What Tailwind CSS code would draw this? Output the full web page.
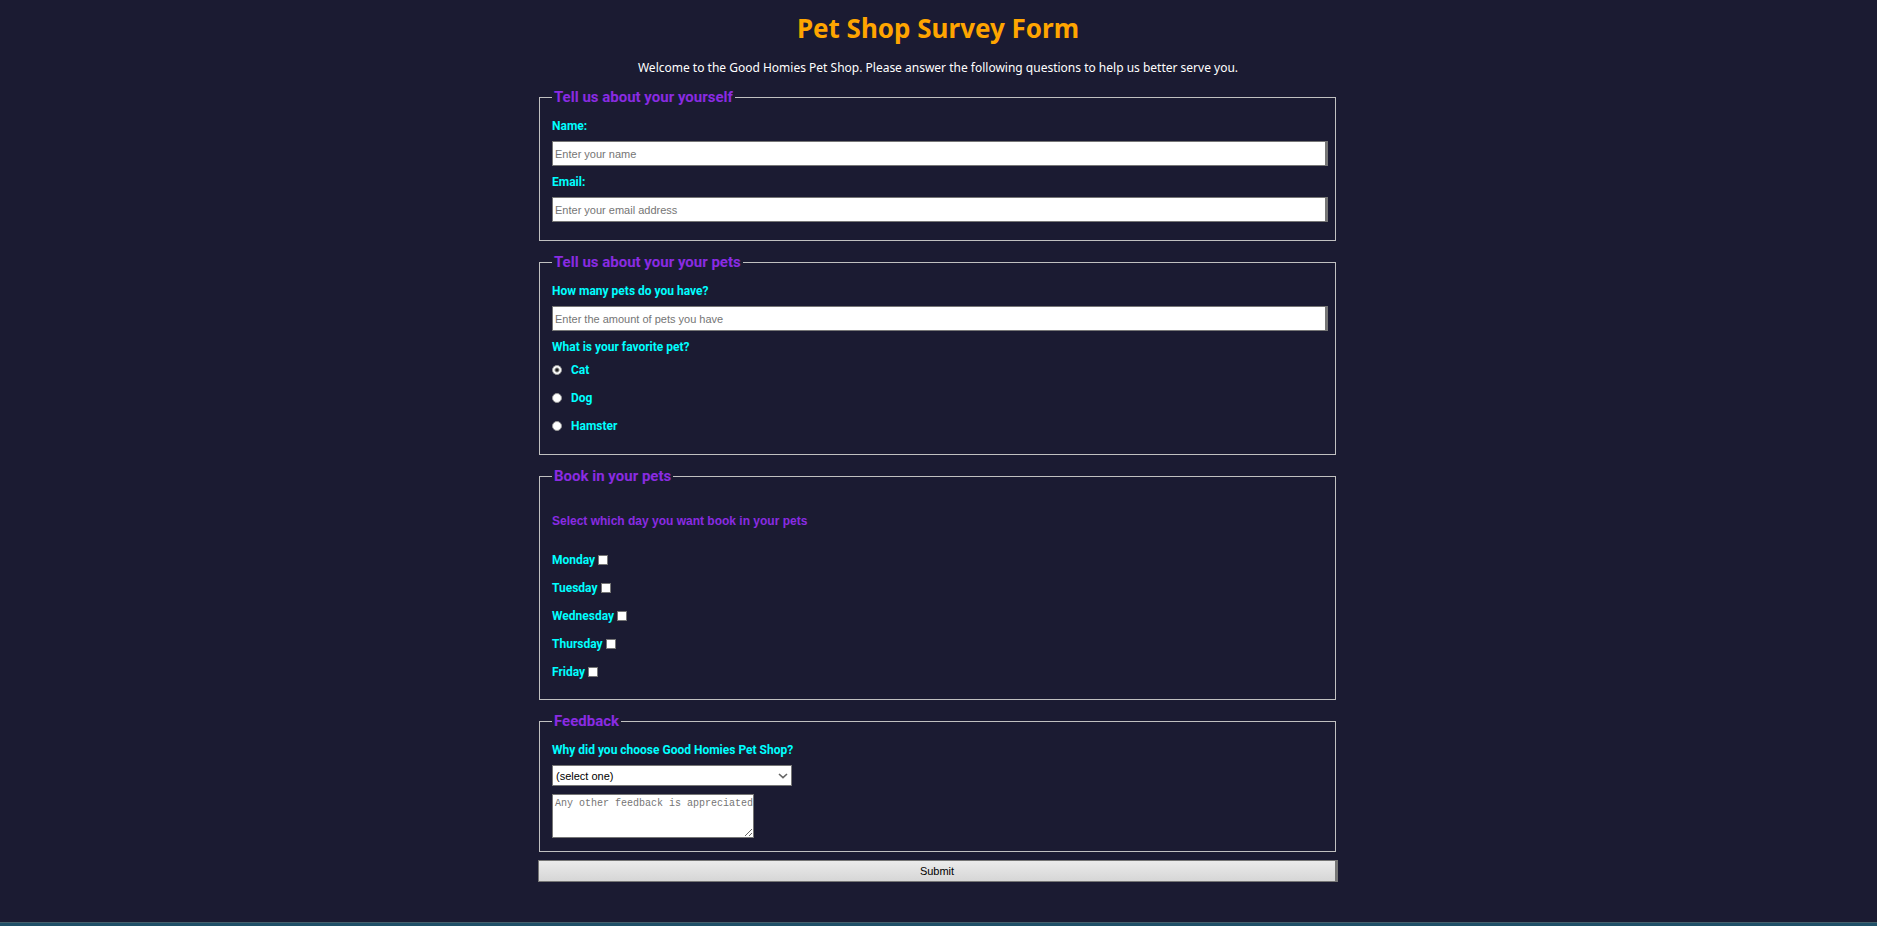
<!DOCTYPE html>
<html lang="en">
<head>
<meta charset="utf-8">
<title>Pet Shop Survey Form</title>
<script src="https://cdn.jsdelivr.net/npm/@tailwindcss/browser@4"></script>
</head>
<body class="bg-white pr-[7px]">
<div class="flex min-h-screen flex-col bg-[#1b1b32] text-white">
  <div class="pr-px">
  <main class="mx-auto w-full max-w-[800px] pt-3">
    <h1 class="text-center font-['Noto_Sans',sans-serif] text-[26px] leading-8 font-bold text-[#ffa500]">Pet Shop Survey Form</h1>
    <p class="mt-3.5 text-center font-['Noto_Sans',sans-serif] text-[12px] leading-5">Welcome to the Good Homies Pet Shop. Please answer the following questions to help us better serve you.</p>

    <form class="mt-[9px] font-['Roboto',sans-serif] text-[12px] leading-5 font-bold text-[#00ffff]">
      <div class="mr-0.5 ml-px flex flex-col gap-[11px]">
        <fieldset class="border border-[#c0c0c0] pr-[7px] pb-[18px] pl-3">
          <legend class="px-0.5 text-[15px] text-[#8a2be2]">Tell us about your yourself</legend>
          <label for="name" class="block pt-[9px]">Name:</label>
          <input id="name" type="text" placeholder="Enter your name" class="mt-[5px] block h-[25px] w-full border border-r-[3px] border-[#767676] bg-white px-0.5 font-['Liberation_Sans',sans-serif] text-[11px] font-normal text-black placeholder:text-[#757575]">
          <label for="email" class="mt-1.5 block">Email:</label>
          <input id="email" type="email" placeholder="Enter your email address" class="mt-[5px] block h-[25px] w-full border border-r-[3px] border-[#767676] bg-white px-0.5 font-['Liberation_Sans',sans-serif] text-[11px] font-normal text-black placeholder:text-[#757575]">
        </fieldset>

        <fieldset class="border border-[#c0c0c0] pr-[7px] pb-[18px] pl-3">
          <legend class="px-0.5 text-[15px] text-[#8a2be2]">Tell us about your your pets</legend>
          <label for="count" class="block pt-[9px]">How many pets do you have?</label>
          <input id="count" type="text" placeholder="Enter the amount of pets you have" class="mt-[5px] block h-[25px] w-full border border-r-[3px] border-[#767676] bg-white px-0.5 font-['Liberation_Sans',sans-serif] text-[11px] font-normal text-black placeholder:text-[#757575]">
          <p class="mt-1.5">What is your favorite pet?</p>
          <div class="mt-[3px] flex flex-col items-start gap-2">
            <label class="flex items-center gap-[9px]"><input type="radio" name="pet" checked class="size-2.5 appearance-none rounded-full border border-[#999] bg-white checked:bg-[radial-gradient(circle,#222_0_1px,#fff_3px)]">Cat</label>
            <label class="flex items-center gap-[9px]"><input type="radio" name="pet" class="size-2.5 appearance-none rounded-full border border-[#999] bg-white checked:bg-[radial-gradient(circle,#222_0_1px,#fff_3px)]">Dog</label>
            <label class="flex items-center gap-[9px]"><input type="radio" name="pet" class="size-2.5 appearance-none rounded-full border border-[#999] bg-white checked:bg-[radial-gradient(circle,#222_0_1px,#fff_3px)]">Hamster</label>
          </div>
        </fieldset>

        <fieldset class="border border-[#c0c0c0] pr-[7px] pb-[17px] pl-3">
          <legend class="px-0.5 text-[15px] text-[#8a2be2]">Book in your pets</legend>
          <h2 class="pt-[25px] font-['Liberation_Sans',sans-serif] text-[#8a2be2]">Select which day you want book in your pets</h2>
          <div class="mt-[19px] flex flex-col items-start gap-2">
            <label class="flex items-center gap-[3px]">Monday<input type="checkbox" class="size-2.5 appearance-none border border-[#767676] bg-white checked:bg-[#0075ff]"></label>
            <label class="flex items-center gap-[3px]">Tuesday<input type="checkbox" class="size-2.5 appearance-none border border-[#767676] bg-white checked:bg-[#0075ff]"></label>
            <label class="flex items-center gap-[3px]">Wednesday<input type="checkbox" class="size-2.5 appearance-none border border-[#767676] bg-white checked:bg-[#0075ff]"></label>
            <label class="flex items-center gap-[3px]">Thursday<input type="checkbox" class="size-2.5 appearance-none border border-[#767676] bg-white checked:bg-[#0075ff]"></label>
            <label class="flex items-center gap-[3px]">Friday<input type="checkbox" class="size-2.5 appearance-none border border-[#767676] bg-white checked:bg-[#0075ff]"></label>
          </div>
        </fieldset>

        <fieldset class="border border-[#c0c0c0] pr-[7px] pb-[13px] pl-3">
          <legend class="px-0.5 text-[15px] text-[#8a2be2]">Feedback</legend>
          <label for="why" class="block pt-[9px]">Why did you choose Good Homies Pet Shop?</label>
          <div class="relative mt-[5px] w-60">
            <select id="why" class="block h-[21px] w-full appearance-none border border-[#767676] bg-white px-[3px] font-['Liberation_Sans',sans-serif] text-[11px] font-normal text-black">
              <option>(select one)</option>
              <option>Price</option>
              <option>Location</option>
              <option>Service</option>
            </select>
            <svg class="pointer-events-none absolute top-2 right-1 h-1.5 w-2.5" viewBox="0 0 10 6" fill="none" stroke="#666" stroke-width="1.6"><path d="M1 1l4 3.6L9 1"/></svg>
          </div>
          <textarea aria-label="Other feedback" placeholder="Any other feedback is appreciated" class="mt-2 block h-11 w-[202px] overflow-hidden border border-[#767676] bg-white pt-[3px] pl-0.5 font-['Liberation_Mono',monospace] text-[10px] leading-3 font-normal whitespace-nowrap text-black placeholder:text-[#757575]"></textarea>
        </fieldset>
      </div>
      <button type="submit" class="mt-2 block h-[22px] w-full border border-r-[3px] border-[#767676] bg-linear-to-b from-[#ebebeb] to-[#d6d6d6] font-['Liberation_Sans',sans-serif] text-[11px] leading-5 font-normal text-black">Submit</button>
    </form>
  </main>
  </div>
  <div class="mt-auto h-1 border-t border-[#45606c] bg-[#1f5068]"></div>
</div>
</body>
</html>
